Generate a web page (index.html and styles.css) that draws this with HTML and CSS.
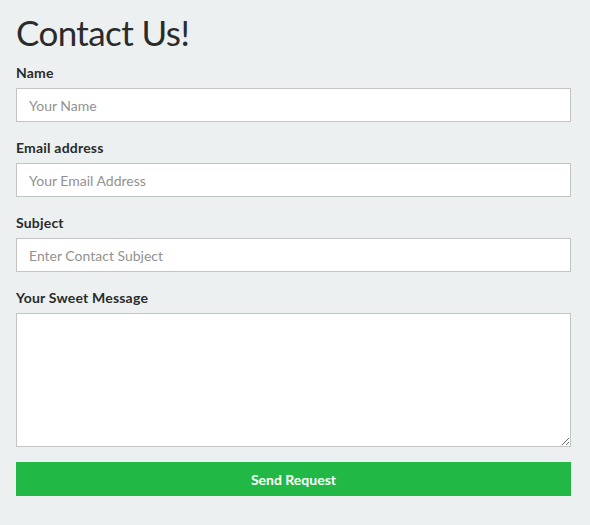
FILE: index.html
```html
<!DOCTYPE html>
<html>
<head>
<meta charset="utf-8">
<link rel="stylesheet" href="styles.css">
</head>
<body>
<div class="page">
  <h1 class="title">Contact Us!</h1>
  <form class="form">
    <div class="group">
      <label class="label">Name</label>
      <input class="field" type="text" placeholder="Your Name">
    </div>
    <div class="group">
      <label class="label">Email address</label>
      <input class="field" type="email" placeholder="Your Email Address">
    </div>
    <div class="group">
      <label class="label">Subject</label>
      <input class="field" type="text" placeholder="Enter Contact Subject">
    </div>
    <div class="group">
      <label class="label">Your Sweet Message</label>
      <textarea class="field area"></textarea>
    </div>
    <button class="send" type="button">Send Request</button>
  </form>
</div>
</body>
</html>
```

FILE: styles.css
```css
html, body {
  margin: 0;
  padding: 0;
  background: #ecf0f1;
}
body {
  font-family: Lato, "Open Sans", sans-serif;
  color: #2b2b2b;
}
.page {
  padding: 12px 19px 0 16px;
}
.title {
  margin: 0 0 10px;
  font-size: 35px;
  line-height: 40px;
  font-weight: 400;
  letter-spacing: -0.6px;
  color: #2b2b2b;
}
.form {
  display: flex;
  flex-direction: column;
}
.group {
  display: flex;
  flex-direction: column;
  margin-bottom: 15px;
}
.label {
  font-size: 14px;
  line-height: 21px;
  font-weight: 700;
  letter-spacing: 0.2px;
  margin-bottom: 5px;
}
.field {
  box-sizing: border-box;
  height: 34px;
  border: 1px solid #c4c4c4;
  border-radius: 0;
  background: #fff;
  padding: 0 12px;
  font-family: inherit;
  font-size: 14px;
  color: #333;
  outline: none;
}
.field::placeholder {
  color: #929292;
}
.area {
  height: 134px;
  resize: vertical;
  display: block;
}
.send {
  height: 34px;
  border: none;
  background: #22b845;
  color: #fff;
  font-family: inherit;
  font-size: 14px;
  font-weight: 700;
  margin-top: 0;
}
```
